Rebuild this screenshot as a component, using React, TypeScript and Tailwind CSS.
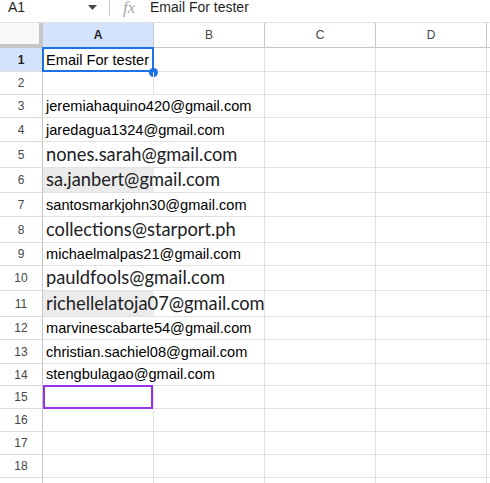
const rows = [
  { n: 1, h: "h-[24px]", text: "Email For tester", active: true },
  { n: 2, h: "h-[23px]" },
  { n: 3, h: "h-[23px]", text: "jeremiahaquino420@gmail.com" },
  { n: 4, h: "h-[24px]", text: "jaredagua1324@gmail.com" },
  { n: 5, h: "h-[26px]", text: "nones.sarah@gmail.com", big: true },
  { n: 6, h: "h-[25px]", text: "sa.janbert@gmail.com", big: true, shade: true },
  { n: 7, h: "h-[24px]", text: "santosmarkjohn30@gmail.com" },
  { n: 8, h: "h-[26px]", text: "collections@starport.ph", big: true },
  { n: 9, h: "h-[23px]", text: "michaelmalpas21@gmail.com" },
  { n: 10, h: "h-[25px]", text: "pauldfools@gmail.com", big: true },
  { n: 11, h: "h-[26px]", text: "richellelatoja07@gmail.com", big: true, shade: true },
  { n: 12, h: "h-[23px]", text: "marvinescabarte54@gmail.com" },
  { n: 13, h: "h-[24px]", text: "christian.sachiel08@gmail.com" },
  { n: 14, h: "h-[22px]", text: "stengbulagao@gmail.com" },
  { n: 15, h: "h-[23px]", cursor: true },
  { n: 16, h: "h-[23px]" },
  { n: 17, h: "h-[23px]" },
  { n: 18, h: "h-[23px]" },
  { n: 19, h: "h-[23px]" },
]

type Row = (typeof rows)[number] & { big?: boolean; shade?: boolean; active?: boolean; cursor?: boolean; text?: string }

function FormulaBar() {
  return (
    <div className="flex h-[23px] items-start border-b border-[#e1e1e1] bg-white pt-[1px] font-['Liberation_Sans',Arial,sans-serif] text-[14px] leading-[13px] text-[#1f1f1f]">
      <div className="w-[80px] pl-[8px]">A1</div>
      <svg width="9" height="5" viewBox="0 0 9 5" className="mt-[4px] ml-[8px]">
        <path d="M0 0h9L4.5 5z" fill="#444746" />
      </svg>
      <div className="ml-[12px] mt-[-1px] h-[16px] w-px bg-[#c4c7c5]" />
      <div className="ml-[13px] w-[27px] font-['Liberation_Serif',serif] text-[17px] italic leading-[13px] text-[#a8a8a8]">fx</div>
      <div>Email For tester</div>
    </div>
  )
}

function ColumnHeaders() {
  const cols = ["A", "B", "C", "D"]
  return (
    <div className="flex h-[25px] bg-white font-['Liberation_Sans',Arial,sans-serif] text-[12px] text-[#444746]">
      <div className="w-[43px] shrink-0 border-r-4 border-b-4 border-[#c4c7c5] bg-[#f8f9fa]" />
      {cols.map((c) => (
        <div
          key={c}
          className={`flex w-[111px] shrink-0 items-center justify-center border-r border-b border-[#c4c7c5] ${c === "A" ? "bg-[#d3e3fd] font-bold text-[#1f1f1f]" : ""}`}
        >
          {c}
        </div>
      ))}
      <div className="flex-1 border-b border-[#c4c7c5]" />
    </div>
  )
}

function SheetRow({ row }: { row: Row }) {
  const overflow = !!row.text && !row.active
  return (
    <div className={`flex ${row.h}`}>
      <div
        className={`flex w-[43px] shrink-0 items-center justify-center border-r border-b border-r-[#c4c7c5] border-b-[#dadce0] font-['Liberation_Sans',Arial,sans-serif] text-[12px] ${row.active ? "bg-[#d3e3fd] font-bold text-[#1f1f1f]" : "bg-white text-[#444746]"}`}
      >
        {row.n}
      </div>
      <div
        className={`relative flex w-[111px] shrink-0 items-end border-r border-b border-b-[#e1e1e1] ${overflow ? "border-r-transparent" : "border-r-[#e1e1e1]"} ${row.shade ? "bg-[#ebebeb]" : ""}`}
      >
        {row.text && (
          <span
            className={`whitespace-nowrap pb-[2px] pl-[3px] ${row.big ? "font-['Lato',sans-serif] text-[18.3px] font-normal leading-[22px] text-[#202124]" : "font-['Liberation_Sans',Arial,sans-serif] text-[14.6px] leading-[17px] text-black"}`}
          >
            {row.text}
          </span>
        )}
        {row.active && (
          <>
            <div className="pointer-events-none absolute top-[-1px] left-[-1px] right-[-1px] bottom-[-1px] border-2 border-[#1a73e8]" />
            <div className="absolute right-[-5px] bottom-[-6px] h-[9px] w-[9px] rounded-full bg-[#1a73e8]" />
          </>
        )}
        {row.cursor && (
          <div className="pointer-events-none absolute top-[-1px] left-0 right-0 bottom-[-1px] border-2 border-[#9334e6]" />
        )}
      </div>
      <div className="w-[111px] shrink-0 border-r border-b border-[#e1e1e1]" />
      <div className="w-[111px] shrink-0 border-r border-b border-[#e1e1e1]" />
      <div className="w-[111px] shrink-0 border-r border-b border-[#e1e1e1]" />
      <div className="flex-1 border-b border-[#e1e1e1]" />
    </div>
  )
}

export default function App() {
  return (
    <div className="h-[483px] w-[490px] overflow-hidden bg-white">
      <FormulaBar />
      <ColumnHeaders />
      {rows.map((r) => (
        <SheetRow key={r.n} row={r as Row} />
      ))}
    </div>
  )
}
